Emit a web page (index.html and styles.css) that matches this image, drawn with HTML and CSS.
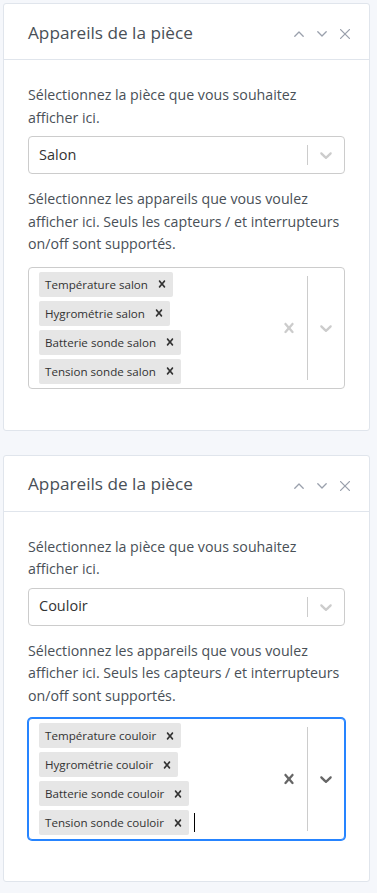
FILE: index.html
```html
<!DOCTYPE html>
<html lang="fr">
<head>
<meta charset="utf-8">
<title>Appareils de la pièce</title>
<link rel="stylesheet" href="styles.css">
</head>
<body>
<div class="page">

  <section class="card">
    <header class="card-header">
      <h3 class="card-title">Appareils de la pièce</h3>
      <div class="card-options">
        <span class="opt"><svg width="10" height="6" viewBox="0 0 10 6"><polyline points="0.8,5.2 5,1 9.2,5.2"/></svg></span>
        <span class="opt"><svg width="10" height="6" viewBox="0 0 10 6"><polyline points="0.8,0.8 5,5 9.2,0.8"/></svg></span>
        <span class="opt"><svg width="10" height="10" viewBox="0 0 10 10"><line x1="0.6" y1="0.6" x2="9.4" y2="9.4"/><line x1="9.4" y1="0.6" x2="0.6" y2="9.4"/></svg></span>
      </div>
    </header>
    <div class="card-body">
      <p class="label first">Sélectionnez la pièce que vous souhaitez afficher ici.</p>
      <div class="select">
        <div class="value-container"><span class="single-value">Salon</span></div>
        <div class="indicators">
          <span class="separator"></span>
          <span class="indicator"><svg viewBox="0 0 20 20" width="20" height="20"><path d="M4.516 7.548c0.436-0.446 1.043-0.481 1.576 0l3.908 3.747 3.908-3.747c0.533-0.481 1.141-0.446 1.574 0 0.436 0.445 0.408 1.197 0 1.615-0.406 0.418-4.695 4.502-4.695 4.502-0.217 0.223-0.502 0.335-0.787 0.335s-0.57-0.112-0.789-0.335c0 0-4.287-4.084-4.695-4.502s-0.436-1.170 0-1.615z"/></svg></span>
        </div>
      </div>
      <p class="label second">Sélectionnez les appareils que vous voulez afficher ici. Seuls les capteurs / et interrupteurs on/off sont supportés.</p>
      <div class="select multi">
        <div class="value-container multi-values">
          <span class="tag"><span class="tag-label">Température salon</span><span class="tag-remove"><svg viewBox="0 0 20 20" width="14" height="14"><path d="M14.348 14.849c-0.469 0.469-1.229 0.469-1.697 0l-2.651-3.030-2.651 3.029c-0.469 0.469-1.229 0.469-1.697 0-0.469-0.469-0.469-1.229 0-1.697l2.758-3.150-2.759-3.152c-0.469-0.469-0.469-1.228 0-1.697s1.228-0.469 1.697 0l2.652 3.031 2.651-3.031c0.469-0.469 1.228-0.469 1.697 0s0.469 1.229 0 1.697l-2.758 3.152 2.758 3.150c0.469 0.469 0.469 1.229 0 1.698z"/></svg></span></span>
          <span class="tag"><span class="tag-label">Hygrométrie salon</span><span class="tag-remove"><svg viewBox="0 0 20 20" width="14" height="14"><path d="M14.348 14.849c-0.469 0.469-1.229 0.469-1.697 0l-2.651-3.030-2.651 3.029c-0.469 0.469-1.229 0.469-1.697 0-0.469-0.469-0.469-1.229 0-1.697l2.758-3.150-2.759-3.152c-0.469-0.469-0.469-1.228 0-1.697s1.228-0.469 1.697 0l2.652 3.031 2.651-3.031c0.469-0.469 1.228-0.469 1.697 0s0.469 1.229 0 1.697l-2.758 3.152 2.758 3.150c0.469 0.469 0.469 1.229 0 1.698z"/></svg></span></span>
          <span class="tag"><span class="tag-label">Batterie sonde salon</span><span class="tag-remove"><svg viewBox="0 0 20 20" width="14" height="14"><path d="M14.348 14.849c-0.469 0.469-1.229 0.469-1.697 0l-2.651-3.030-2.651 3.029c-0.469 0.469-1.229 0.469-1.697 0-0.469-0.469-0.469-1.229 0-1.697l2.758-3.150-2.759-3.152c-0.469-0.469-0.469-1.228 0-1.697s1.228-0.469 1.697 0l2.652 3.031 2.651-3.031c0.469-0.469 1.228-0.469 1.697 0s0.469 1.229 0 1.697l-2.758 3.152 2.758 3.150c0.469 0.469 0.469 1.229 0 1.698z"/></svg></span></span>
          <span class="tag"><span class="tag-label">Tension sonde salon</span><span class="tag-remove"><svg viewBox="0 0 20 20" width="14" height="14"><path d="M14.348 14.849c-0.469 0.469-1.229 0.469-1.697 0l-2.651-3.030-2.651 3.029c-0.469 0.469-1.229 0.469-1.697 0-0.469-0.469-0.469-1.229 0-1.697l2.758-3.150-2.759-3.152c-0.469-0.469-0.469-1.228 0-1.697s1.228-0.469 1.697 0l2.652 3.031 2.651-3.031c0.469-0.469 1.228-0.469 1.697 0s0.469 1.229 0 1.697l-2.758 3.152 2.758 3.150c0.469 0.469 0.469 1.229 0 1.698z"/></svg></span></span>
        </div>
        <div class="indicators">
          <span class="indicator"><svg viewBox="0 0 20 20" width="20" height="20"><path d="M14.348 14.849c-0.469 0.469-1.229 0.469-1.697 0l-2.651-3.030-2.651 3.029c-0.469 0.469-1.229 0.469-1.697 0-0.469-0.469-0.469-1.229 0-1.697l2.758-3.150-2.759-3.152c-0.469-0.469-0.469-1.228 0-1.697s1.228-0.469 1.697 0l2.652 3.031 2.651-3.031c0.469-0.469 1.228-0.469 1.697 0s0.469 1.229 0 1.697l-2.758 3.152 2.758 3.150c0.469 0.469 0.469 1.229 0 1.698z"/></svg></span>
          <span class="separator"></span>
          <span class="indicator"><svg viewBox="0 0 20 20" width="20" height="20"><path d="M4.516 7.548c0.436-0.446 1.043-0.481 1.576 0l3.908 3.747 3.908-3.747c0.533-0.481 1.141-0.446 1.574 0 0.436 0.445 0.408 1.197 0 1.615-0.406 0.418-4.695 4.502-4.695 4.502-0.217 0.223-0.502 0.335-0.787 0.335s-0.57-0.112-0.789-0.335c0 0-4.287-4.084-4.695-4.502s-0.436-1.170 0-1.615z"/></svg></span>
        </div>
      </div>
    </div>
  </section>

  <section class="card">
    <header class="card-header">
      <h3 class="card-title">Appareils de la pièce</h3>
      <div class="card-options">
        <span class="opt"><svg width="10" height="6" viewBox="0 0 10 6"><polyline points="0.8,5.2 5,1 9.2,5.2"/></svg></span>
        <span class="opt"><svg width="10" height="6" viewBox="0 0 10 6"><polyline points="0.8,0.8 5,5 9.2,0.8"/></svg></span>
        <span class="opt"><svg width="10" height="10" viewBox="0 0 10 10"><line x1="0.6" y1="0.6" x2="9.4" y2="9.4"/><line x1="9.4" y1="0.6" x2="0.6" y2="9.4"/></svg></span>
      </div>
    </header>
    <div class="card-body">
      <p class="label first">Sélectionnez la pièce que vous souhaitez afficher ici.</p>
      <div class="select">
        <div class="value-container"><span class="single-value">Couloir</span></div>
        <div class="indicators">
          <span class="separator"></span>
          <span class="indicator"><svg viewBox="0 0 20 20" width="20" height="20"><path d="M4.516 7.548c0.436-0.446 1.043-0.481 1.576 0l3.908 3.747 3.908-3.747c0.533-0.481 1.141-0.446 1.574 0 0.436 0.445 0.408 1.197 0 1.615-0.406 0.418-4.695 4.502-4.695 4.502-0.217 0.223-0.502 0.335-0.787 0.335s-0.57-0.112-0.789-0.335c0 0-4.287-4.084-4.695-4.502s-0.436-1.170 0-1.615z"/></svg></span>
        </div>
      </div>
      <p class="label second">Sélectionnez les appareils que vous voulez afficher ici. Seuls les capteurs / et interrupteurs on/off sont supportés.</p>
      <div class="select multi focused">
        <div class="value-container multi-values">
          <span class="tag"><span class="tag-label">Température couloir</span><span class="tag-remove"><svg viewBox="0 0 20 20" width="14" height="14"><path d="M14.348 14.849c-0.469 0.469-1.229 0.469-1.697 0l-2.651-3.030-2.651 3.029c-0.469 0.469-1.229 0.469-1.697 0-0.469-0.469-0.469-1.229 0-1.697l2.758-3.150-2.759-3.152c-0.469-0.469-0.469-1.228 0-1.697s1.228-0.469 1.697 0l2.652 3.031 2.651-3.031c0.469-0.469 1.228-0.469 1.697 0s0.469 1.229 0 1.697l-2.758 3.152 2.758 3.150c0.469 0.469 0.469 1.229 0 1.698z"/></svg></span></span>
          <span class="tag"><span class="tag-label">Hygrométrie couloir</span><span class="tag-remove"><svg viewBox="0 0 20 20" width="14" height="14"><path d="M14.348 14.849c-0.469 0.469-1.229 0.469-1.697 0l-2.651-3.030-2.651 3.029c-0.469 0.469-1.229 0.469-1.697 0-0.469-0.469-0.469-1.229 0-1.697l2.758-3.150-2.759-3.152c-0.469-0.469-0.469-1.228 0-1.697s1.228-0.469 1.697 0l2.652 3.031 2.651-3.031c0.469-0.469 1.228-0.469 1.697 0s0.469 1.229 0 1.697l-2.758 3.152 2.758 3.150c0.469 0.469 0.469 1.229 0 1.698z"/></svg></span></span>
          <span class="tag"><span class="tag-label">Batterie sonde couloir</span><span class="tag-remove"><svg viewBox="0 0 20 20" width="14" height="14"><path d="M14.348 14.849c-0.469 0.469-1.229 0.469-1.697 0l-2.651-3.030-2.651 3.029c-0.469 0.469-1.229 0.469-1.697 0-0.469-0.469-0.469-1.229 0-1.697l2.758-3.150-2.759-3.152c-0.469-0.469-0.469-1.228 0-1.697s1.228-0.469 1.697 0l2.652 3.031 2.651-3.031c0.469-0.469 1.228-0.469 1.697 0s0.469 1.229 0 1.697l-2.758 3.152 2.758 3.150c0.469 0.469 0.469 1.229 0 1.698z"/></svg></span></span>
          <span class="tag"><span class="tag-label">Tension sonde couloir</span><span class="tag-remove"><svg viewBox="0 0 20 20" width="14" height="14"><path d="M14.348 14.849c-0.469 0.469-1.229 0.469-1.697 0l-2.651-3.030-2.651 3.029c-0.469 0.469-1.229 0.469-1.697 0-0.469-0.469-0.469-1.229 0-1.697l2.758-3.150-2.759-3.152c-0.469-0.469-0.469-1.228 0-1.697s1.228-0.469 1.697 0l2.652 3.031 2.651-3.031c0.469-0.469 1.228-0.469 1.697 0s0.469 1.229 0 1.697l-2.758 3.152 2.758 3.150c0.469 0.469 0.469 1.229 0 1.698z"/></svg></span></span>
          <span class="caret"></span>
        </div>
        <div class="indicators">
          <span class="indicator"><svg viewBox="0 0 20 20" width="20" height="20"><path d="M14.348 14.849c-0.469 0.469-1.229 0.469-1.697 0l-2.651-3.030-2.651 3.029c-0.469 0.469-1.229 0.469-1.697 0-0.469-0.469-0.469-1.229 0-1.697l2.758-3.150-2.759-3.152c-0.469-0.469-0.469-1.228 0-1.697s1.228-0.469 1.697 0l2.652 3.031 2.651-3.031c0.469-0.469 1.228-0.469 1.697 0s0.469 1.229 0 1.697l-2.758 3.152 2.758 3.150c0.469 0.469 0.469 1.229 0 1.698z"/></svg></span>
          <span class="separator"></span>
          <span class="indicator"><svg viewBox="0 0 20 20" width="20" height="20"><path d="M4.516 7.548c0.436-0.446 1.043-0.481 1.576 0l3.908 3.747 3.908-3.747c0.533-0.481 1.141-0.446 1.574 0 0.436 0.445 0.408 1.197 0 1.615-0.406 0.418-4.695 4.502-4.695 4.502-0.217 0.223-0.502 0.335-0.787 0.335s-0.57-0.112-0.789-0.335c0 0-4.287-4.084-4.695-4.502s-0.436-1.170 0-1.615z"/></svg></span>
        </div>
      </div>
    </div>
  </section>

</div>
</body>
</html>
```

FILE: styles.css
```css
* { box-sizing: border-box; }

html, body {
  margin: 0;
  padding: 0;
  background: #f5f7fb;
}

body {
  font-family: "Open Sans", "Noto Sans", sans-serif;
  font-size: 14.2px;
  line-height: 22.5px;
  color: #495057;
}

.page {
  padding: 3px 7px 0 3px;
}

.card {
  background: #fff;
  border: 1px solid #e0e5ec;
  border-radius: 3px;
  margin-bottom: 24px;
}

.card-header {
  display: flex;
  align-items: center;
  height: 56px;
  padding: 0 24px;
  border-bottom: 1px solid #e0e5ec;
}

.card-title {
  margin: 0;
  font-size: 17.2px;
  font-weight: 400;
  line-height: 24px;
  color: #495057;
  padding-top: 2px;
}

.card-options {
  margin-left: auto;
  margin-right: -5px;
  display: flex;
  align-items: center;
  gap: 13px;
  padding-top: 5px;
}

.opt {
  display: flex;
  align-items: center;
  justify-content: center;
  width: 10px;
  height: 10px;
}

.opt svg {
  fill: none;
  stroke: #9aa0ac;
  stroke-width: 1.3;
  stroke-linecap: round;
  stroke-linejoin: round;
}

.card-body {
  padding: 24px 24px 41px;
}

.label {
  margin: 0;
}

.label.first { margin-bottom: 7px; }
.label.second { margin-top: 14px; margin-bottom: 11px; }

.select {
  display: flex;
  align-items: stretch;
  min-height: 38px;
  border: 1px solid #ccc;
  border-radius: 4px;
  background: #fff;
}

.select.focused {
  border-color: #2684ff;
  box-shadow: 0 0 0 1px #2684ff;
}

.value-container {
  flex: 1;
  display: flex;
  align-items: center;
  padding: 2px 8px;
  min-width: 0;
}

.single-value {
  margin-left: 2px;
  color: #333;
  font-size: 14.5px;
}

.multi-values {
  flex-wrap: wrap;
}

.tag {
  display: flex;
  margin: 2px;
  background: #e6e6e6;
  border-radius: 2px;
}

.tag-label {
  font-size: 11.6px;
  line-height: 19px;
  padding: 3px 3px 3px 6px;
  color: #333;
  white-space: nowrap;
}

.tag-remove {
  display: flex;
  align-items: center;
  padding: 0 4px;
  border-radius: 2px;
}

.tag-remove svg {
  fill: #333;
}

.caret {
  display: block;
  width: 1px;
  height: 19px;
  margin: 2px 2px 2px 3px;
  background: #000;
}

.indicators {
  display: flex;
  align-items: center;
  flex-shrink: 0;
}

.indicator {
  display: flex;
  padding: 8px;
}

.indicator svg {
  fill: #ccc;
}

.focused .indicator svg {
  fill: #666;
}

.separator {
  align-self: stretch;
  width: 1px;
  margin: 8px 0;
  background: #ccc;
}
```
